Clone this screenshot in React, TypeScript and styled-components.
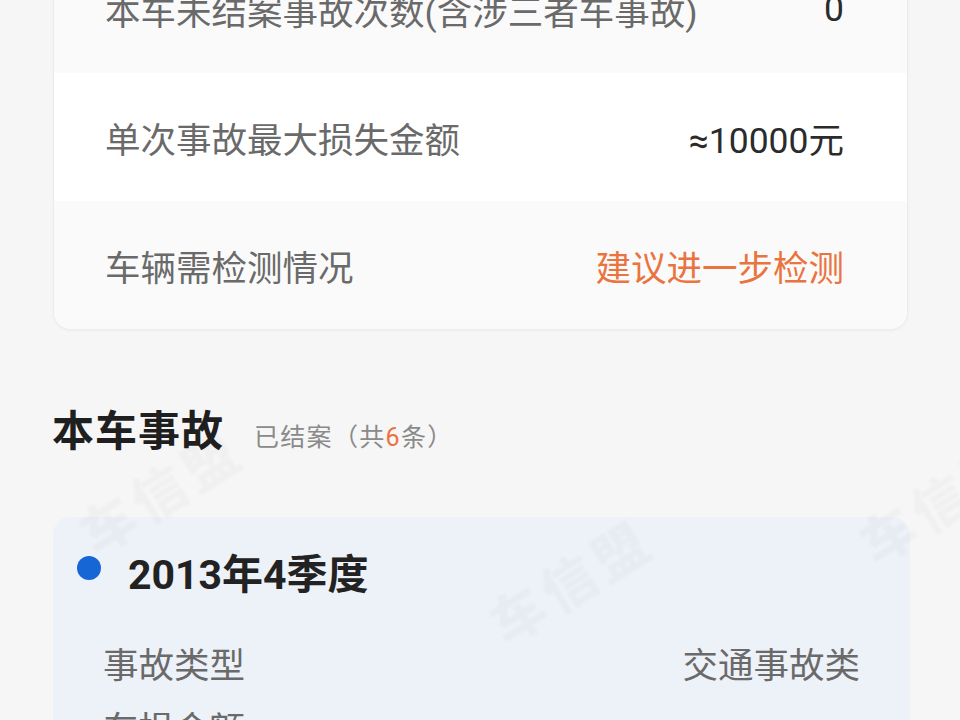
import React from 'react'
import styled, { createGlobalStyle } from 'styled-components'

const GlobalStyle = createGlobalStyle`
  html, body {
    margin: 0;
    padding: 0;
    background: #f6f6f6;
    overflow: hidden;
  }
  body {
    font-family: Roboto, "Noto Sans CJK SC", "Noto Sans", sans-serif;
  }
`

const Page = styled.div`
  position: relative;
  width: 960px;
  height: 720px;
  overflow: hidden;
  padding: 0 52px 0 53px;
  box-sizing: border-box;
`

const InfoCard = styled.div`
  margin-top: -56px;
  background: #fff;
  border: 1px solid #ececec;
  border-radius: 18px;
  overflow: hidden;
  box-shadow: 0 1px 3px rgba(0, 0, 0, 0.04);
`

const InfoRow = styled.div<{ $shade?: boolean }>`
  height: 128px;
  display: flex;
  align-items: center;
  justify-content: space-between;
  padding: 0 63px 0 51px;
  background: ${p => (p.$shade ? '#fafafa' : '#ffffff')};
`

const Label = styled.span`
  font-size: 35.5px;
  color: #6a6a6a;
  font-weight: 400;
`

const Value = styled.span<{ $tone?: 'orange' | 'dark' }>`
  font-size: 35.5px;
  color: ${p => (p.$tone === 'orange' ? '#ea7440' : '#2b2b2b')};
`

const SectionHead = styled.div`
  display: flex;
  align-items: baseline;
  gap: 30px;
  margin: 72px 0 0 -1px;
  height: 60px;
  line-height: 60px;
`

const SectionTitle = styled.h2`
  margin: 0;
  font-size: 42px;
  font-weight: 700;
  color: #1f1f1f;
  letter-spacing: 1px;
`

const SectionNote = styled.span`
  font-size: 25px;
  color: #8a8a8a;
  letter-spacing: 1.3px;
`

const Count = styled.span`
  color: #ea7440;
`

const AccidentCard = styled.div`
  margin: 55px -2px 0 0;
  background: #edf1f8;
  border-radius: 18px 18px 0 0;
  padding: 27px 50px 0 50px;
  height: 300px;
`

const CardHead = styled.div`
  display: flex;
  align-items: center;
  height: 54px;
  margin-left: -26px;
`

const Dot = styled.span`
  width: 24px;
  height: 24px;
  border-radius: 50%;
  background: #1766d6;
  margin: -6px 27px 0 0;
  flex-shrink: 0;
`

const Period = styled.span`
  font-size: 41px;
  font-weight: 700;
  color: #222;
  letter-spacing: 0;
`

const DetailList = styled.div`
  margin-top: 32px;
  display: flex;
  flex-direction: column;
`

const DetailRow = styled.div`
  height: 64px;
  display: flex;
  align-items: center;
  justify-content: space-between;
`

const Watermark = styled.span<{ $x: number; $y: number }>`
  position: absolute;
  left: ${p => p.$x}px;
  top: ${p => p.$y}px;
  font-size: 54px;
  font-weight: 900;
  color: rgba(0, 0, 0, 0.025);
  transform: rotate(-32deg);
  letter-spacing: 6px;
  pointer-events: none;
  white-space: nowrap;
  filter: blur(1px);
`

const infoRows = [
  { label: '本车未结案事故次数(含涉三者车事故)', value: '0', tone: 'dark' as const },
  { label: '单次事故最大损失金额', value: '≈10000元', tone: 'dark' as const },
  { label: '车辆需检测情况', value: '建议进一步检测', tone: 'orange' as const },
]

const details = [
  { label: '事故类型', value: '交通事故类' },
  { label: '车损金额', value: '' },
]

const App = () => {
  return (
    <>
      <GlobalStyle />
      <Page>
        <InfoCard>
          {infoRows.map((r, i) => (
            <InfoRow key={r.label} $shade={i % 2 === 0}>
              <Label>{r.label}</Label>
              <Value $tone={r.tone}>{r.value}</Value>
            </InfoRow>
          ))}
        </InfoCard>

        <SectionHead>
          <SectionTitle>本车事故</SectionTitle>
          <SectionNote>
            已结案（共<Count>6</Count>条）
          </SectionNote>
        </SectionHead>

        <AccidentCard>
          <CardHead>
            <Dot />
            <Period>2013年4季度</Period>
          </CardHead>
          <DetailList>
            {details.map(d => (
              <DetailRow key={d.label}>
                <Label>{d.label}</Label>
                <Label>{d.value}</Label>
              </DetailRow>
            ))}
          </DetailList>
        </AccidentCard>

        <Watermark $x={70} $y={450}>车信盟</Watermark>
        <Watermark $x={480} $y={540}>车信盟</Watermark>
        <Watermark $x={850} $y={460}>车信盟</Watermark>
      </Page>
    </>
  )
}

export default App
